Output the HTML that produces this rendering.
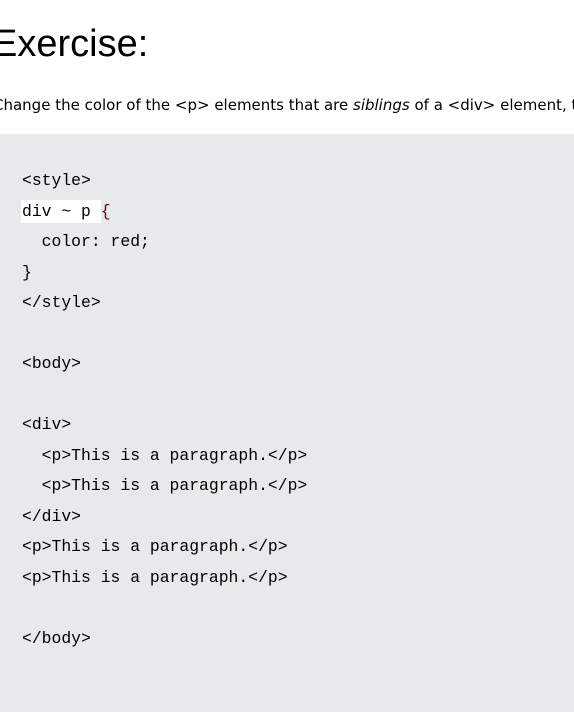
<!DOCTYPE html>
<html><head><style>
html,body{margin:0;padding:0;background:#fff;width:574px;height:712px;overflow:hidden}
h1{position:absolute;left:-8px;top:23px;margin:0;font:400 38px "Liberation Sans",sans-serif;color:#000;white-space:nowrap}
p.d{position:absolute;left:-7px;top:96px;margin:0;font:15px "DejaVu Sans",sans-serif;color:#000;white-space:nowrap;letter-spacing:0px;width:581px;overflow:hidden}
.box{position:absolute;left:0;top:134px;width:574px;height:578px;background:#e7e9eb}
pre{position:absolute;left:22px;top:166px;margin:0;font:16.4px "Liberation Mono",monospace;line-height:30.5px;color:#000}
.in{background:#fff;padding:2px 0;margin-left:-1px;padding-left:1px}
.br{color:#600}
</style></head><body>
<h1>Exercise:</h1>
<p class="d">Change the color of the &lt;p&gt; elements that are <i>siblings</i> of a &lt;div&gt; element, t</p>
<div class="box"></div>
<pre>&lt;style&gt;
<span class="in">div ~ p </span><span class="br">{</span>
  color: red;
}
&lt;/style&gt;

&lt;body&gt;

&lt;div&gt;
  &lt;p&gt;This is a paragraph.&lt;/p&gt;
  &lt;p&gt;This is a paragraph.&lt;/p&gt;
&lt;/div&gt;
&lt;p&gt;This is a paragraph.&lt;/p&gt;
&lt;p&gt;This is a paragraph.&lt;/p&gt;

&lt;/body&gt;</pre>
</body></html>
